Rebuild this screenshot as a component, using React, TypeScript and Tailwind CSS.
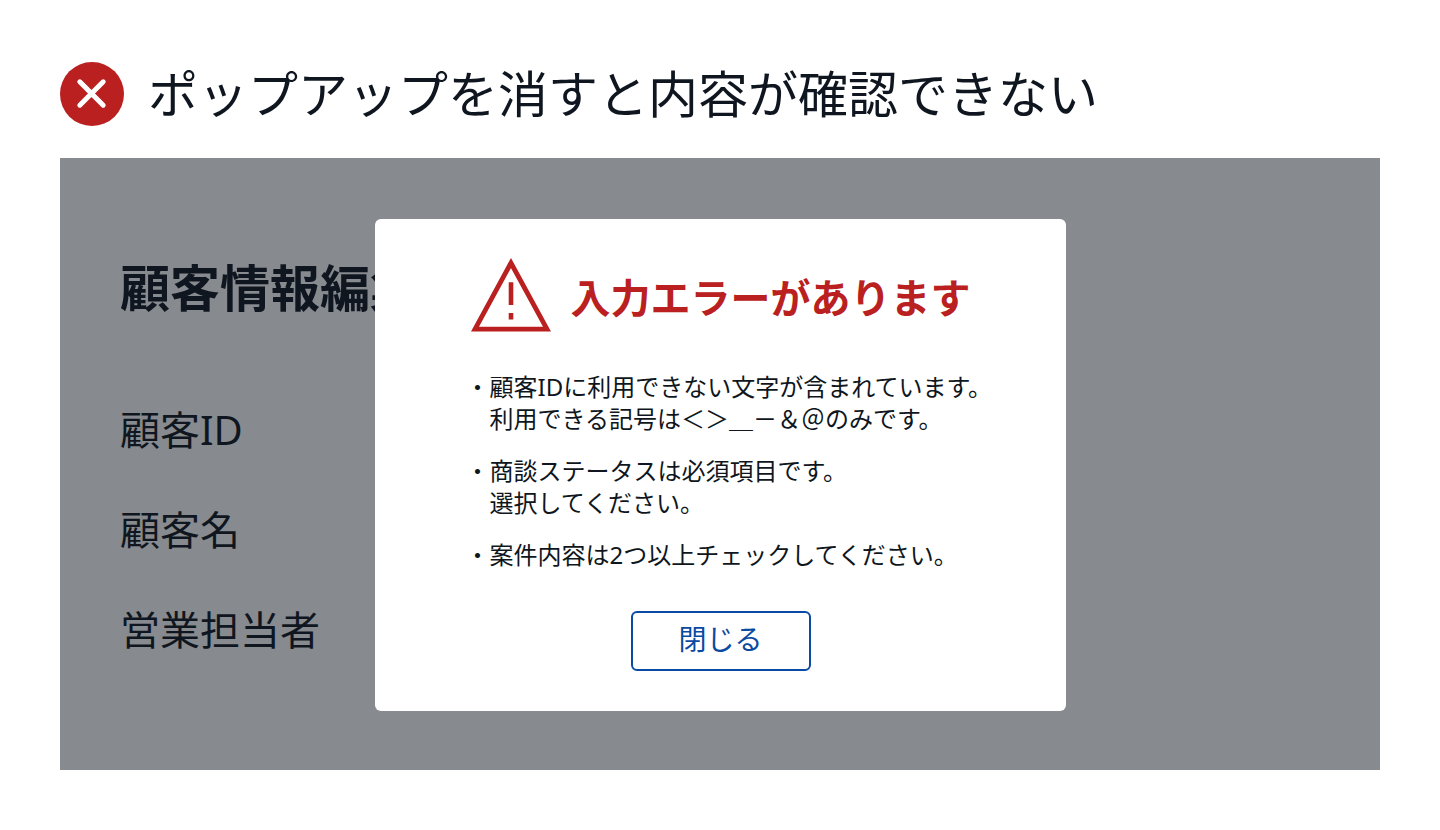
const fields = ["顧客ID", "顧客名", "営業担当者"];

const errors = [
  ["顧客IDに利用できない文字が含まれています。", "利用できる記号は＜＞＿－＆＠のみです。"],
  ["商談ステータスは必須項目です。", "選択してください。"],
  ["案件内容は2つ以上チェックしてください。"],
];

function CrossIcon() {
  return (
    <svg viewBox="0 0 64 64" className="size-16 shrink-0" aria-hidden="true">
      <circle cx="32" cy="32" r="32" fill="#ba2020" />
      <path
        d="M19.8 19.8 43.2 43.2M43.2 19.8 19.8 43.2"
        stroke="#fff"
        strokeWidth="5"
        strokeLinecap="round"
      />
    </svg>
  );
}

function WarningIcon() {
  return (
    <svg viewBox="0 0 80 74" className="h-[74px] w-20 shrink-0" fill="none" aria-hidden="true">
      <path d="M40 5 4 71.2H76Z" stroke="#ba2020" strokeWidth="4.8" />
      <path d="M40 24.3V47M40 55V61.5" stroke="#ba2020" strokeWidth="4.6" />
    </svg>
  );
}

function ErrorDialog() {
  return (
    <div
      role="dialog"
      aria-labelledby="dialog-title"
      className="flex w-full max-w-[691px] flex-col items-center rounded-md bg-white py-10 pr-[90px] pl-[91px]"
    >
      <div className="flex h-[72px] items-center gap-5">
        <WarningIcon />
        <h2 id="dialog-title" className="self-end text-[40px] leading-[66px] font-bold whitespace-nowrap text-[#ba2020]">
          入力エラーがあります
        </h2>
      </div>

      <ul className="mt-10 w-full space-y-5 text-2xl leading-8">
        {errors.map((lines) => (
          <li key={lines[0]} className="flex whitespace-nowrap">
            <span>・</span>
            <div>
              {lines.map((line) => (
                <p key={line}>{line}</p>
              ))}
            </div>
          </li>
        ))}
      </ul>

      <button
        type="button"
        className="mt-10 h-[60px] w-[180px] rounded-md border-2 border-[#0b4aa2] pb-1 text-[28px] leading-8 text-[#0b4aa2]"
      >
        閉じる
      </button>
    </div>
  );
}

export default function App() {
  return (
    <main
      lang="ja"
      className="bg-white px-[60px] pt-[62px] pb-[60px] font-['Noto_Sans','Noto_Sans_CJK_JP',sans-serif] text-[#0f1620]"
    >
      <header className="flex h-16 items-center gap-6">
        <CrossIcon />
        <h1 className="text-[50px] leading-[64px] whitespace-nowrap">
          ポップアップを消すと内容が確認できない
        </h1>
      </header>

      <section className="relative mt-8 bg-[#878a8e] px-[60px] pt-[100px] pb-[120px]">
        <h2 className="text-[50px] leading-[60px] font-bold">顧客情報編集</h2>
        <ul className="mt-[92px] space-y-[60px] text-[40px] leading-10">
          {fields.map((field) => (
            <li key={field}>{field}</li>
          ))}
        </ul>

        <div className="absolute inset-0 flex items-start justify-center pt-[61px]">
          <ErrorDialog />
        </div>
      </section>
    </main>
  );
}
